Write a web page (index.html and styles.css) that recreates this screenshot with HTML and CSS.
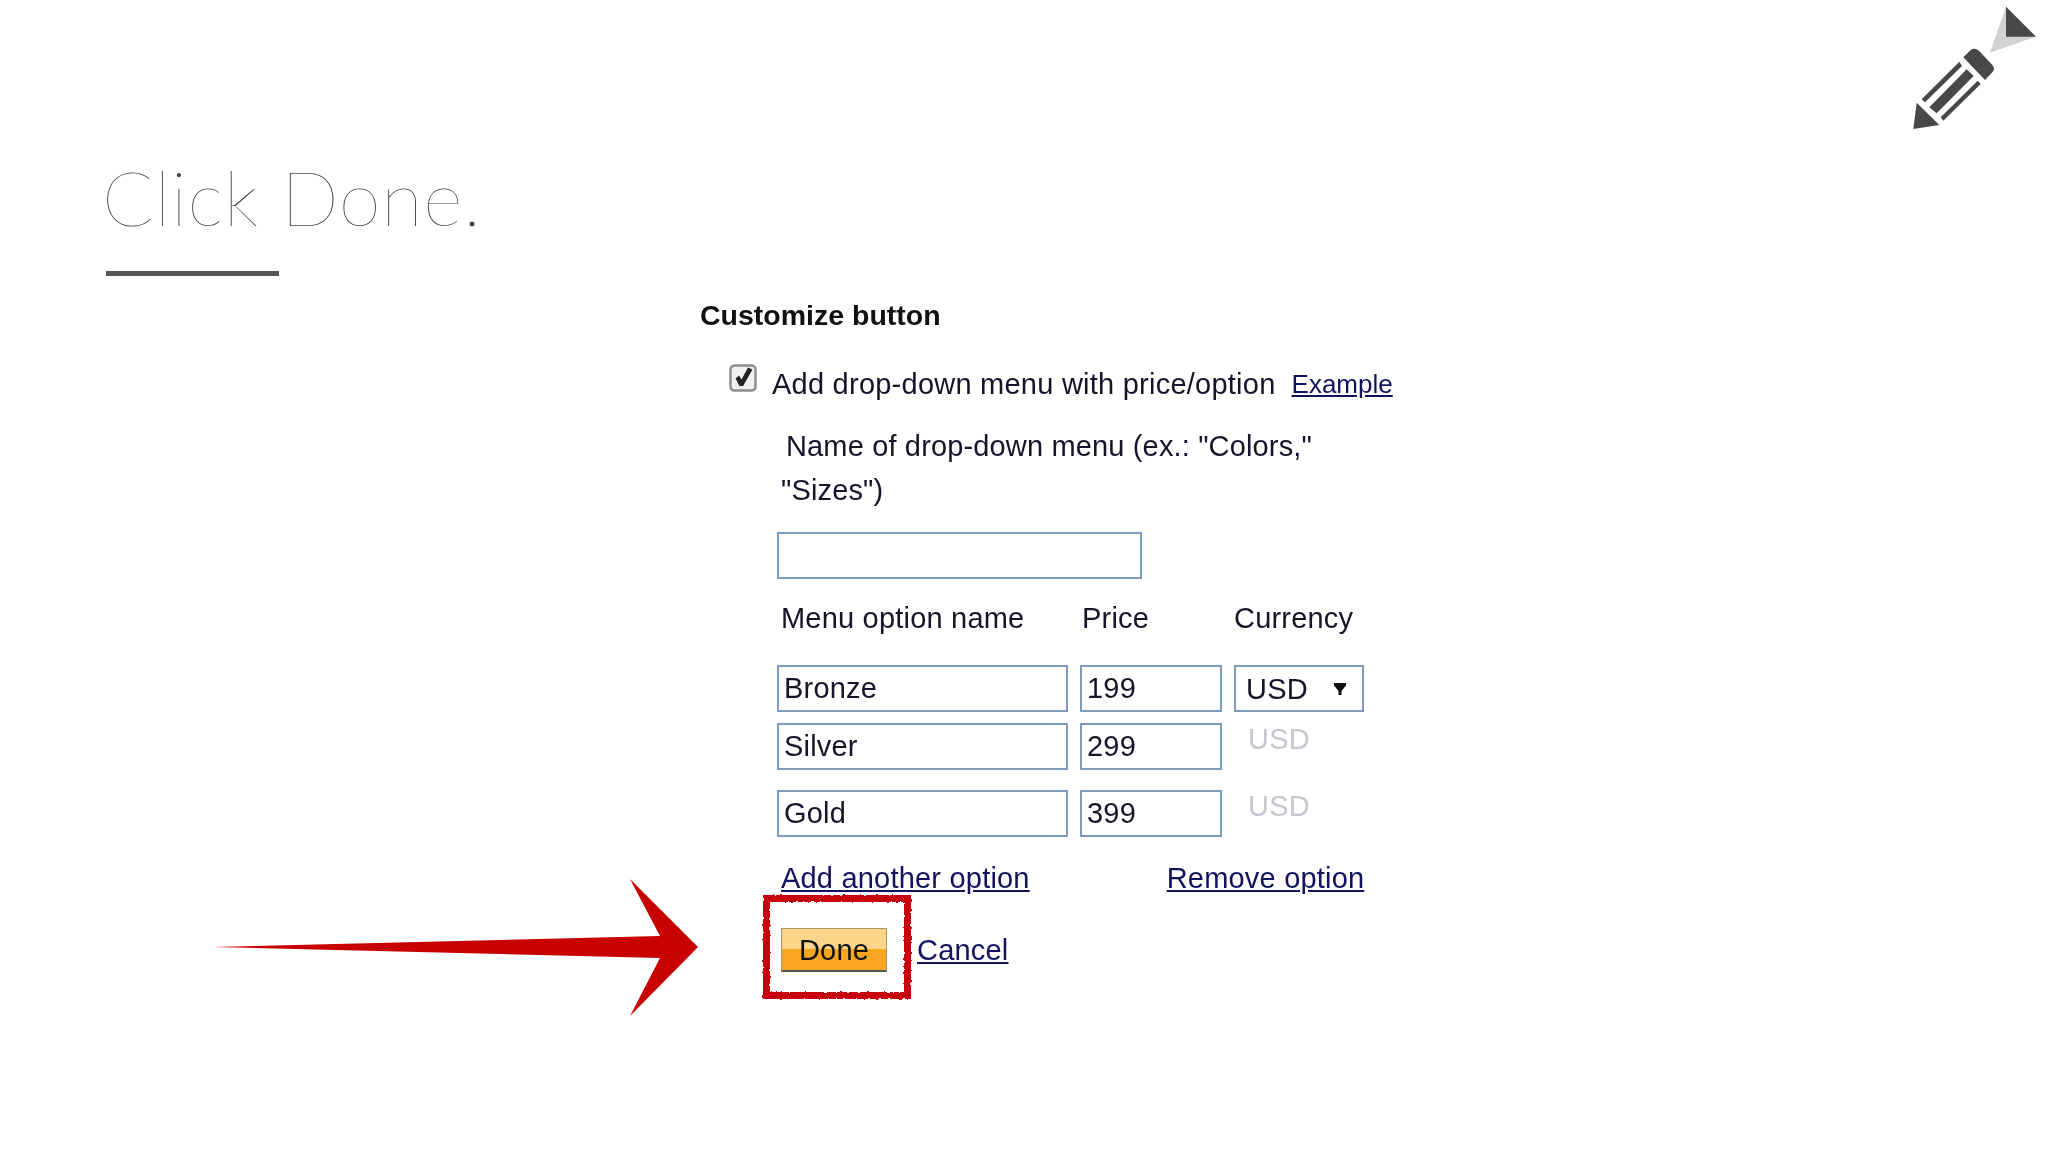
FILE: index.html
```html
<!DOCTYPE html>
<html lang="en">
<head>
<meta charset="utf-8">
<title>Click Done.</title>
<link rel="stylesheet" href="styles.css">
</head>
<body>
<main class="slide">
  <header class="head">
    <h1 class="title">Click Done.</h1>
    <div class="rule"></div>
  </header>

  <section class="form">
    <h2 class="form-title">Customize button</h2>
    <div class="check-row">
      <span class="check">
        <svg viewBox="0 0 28 28" width="28" height="28"><rect x="1.500" y="1.500" width="25" height="25" rx="4" fill="#f2f2f2" stroke="#8f8f8f" stroke-width="2.500"/><path d="M6.500 14.500L10 11.500 12.500 15.500 19 3.500 23.500 5.500 14 22H10.500z" fill="#222"/></svg>
      </span>
      <span class="check-label">Add drop-down menu with price/option</span>
      <a class="link link-small">Example</a>
    </div>
    <div class="inner">
      <p class="name-label"><span class="indent">Name of drop-down menu (ex.: "Colors,"</span><br>"Sizes")</p>
      <div class="field field-name"></div>
      <div class="opt-grid opt-head">
        <span class="col-a">Menu option name</span>
        <span class="col-b">Price</span>
        <span class="col-c">Currency</span>
      </div>
      <div class="opt-grid row-1">
        <div class="field">Bronze</div>
        <div class="field">199</div>
        <div class="field select"><span>USD</span><svg class="caret" viewBox="0 0 14 14" width="14" height="14"><path d="M1 1h12v2.500L8.500 9v4h-3V9L1 3.500z" fill="#111"/></svg></div>
      </div>
      <div class="opt-grid row-2">
        <div class="field">Silver</div>
        <div class="field">299</div>
        <span class="muted">USD</span>
      </div>
      <div class="opt-grid row-3">
        <div class="field">Gold</div>
        <div class="field">399</div>
        <span class="muted">USD</span>
      </div>
      <div class="links">
        <a class="link">Add another option</a>
        <a class="link">Remove option</a>
      </div>
      <div class="actions">
        <span class="done">Done</span>
        <a class="link">Cancel</a>
      </div>
    </div>
  </section>

  <svg class="red-box" viewBox="0 0 156 112" width="156" height="112">
    <defs>
      <filter id="rough" x="-5%" y="-5%" width="110%" height="110%">
        <feTurbulence type="fractalNoise" baseFrequency="0.25" numOctaves="2" seed="4"/>
        <feDisplacementMap in="SourceGraphic" scale="3"/>
      </filter>
    </defs>
    <rect x="7.500" y="7.500" width="141" height="97" fill="none" stroke="#c8050f" stroke-width="7" filter="url(#rough)"/>
  </svg>
  <svg class="arrow" viewBox="0 0 490 140" width="490" height="140"><path d="M0 68L447 57 417 0 485 68 417 137 447 79z" fill="#c80000"/></svg>
  <svg class="pencil" viewBox="0 0 504 420" width="168" height="140">
    <path d="M378 20L330 158 468 110z" fill="#d2d2d2"/>
    <path d="M378 20L468 110H378z" fill="#494747"/>
    <path d="M250 172L272 150Q285 142 297 152L337 195Q347 207 337 217L315 240z" fill="#494747"/>
    <path d="M125 298L238 185 246 198 135 307z" fill="#494747"/>
    <path d="M148 322L260 208 281 228 170 340z" fill="#494747"/>
    <path d="M182 352L293 242 302 252 190 362z" fill="#494747"/>
    <path d="M110 308L178 375 100 387z" fill="#494747"/>
  </svg>
</main>
</body>
</html>
```

FILE: styles.css
```css
* { box-sizing: border-box; }
html, body { margin: 0; padding: 0; background: #fff; }
.slide {
  position: relative;
  width: 2048px;
  height: 1152px;
  overflow: hidden;
  background: #fff;
  font-family: "Liberation Sans", Arial, sans-serif;
  font-size: 29px;
  line-height: 40px;
  letter-spacing: 0.2px;
  color: #15152a;
}
.head { padding: 152px 0 0 102px; height: 295px; }
.title {
  margin: 0;
  font-family: Lato, sans-serif;
  font-weight: 200;
  font-size: 76px;
  line-height: 90px;
  letter-spacing: 0.7px;
  color: #444;
}
.rule { width: 173px; height: 5px; margin: 29px 0 0 4px; background: #555; }
.form { margin-left: 700px; display: flex; flex-direction: column; filter: blur(0.4px); }
.form-title { margin: 0; font-size: 28.5px; line-height: 40px; font-weight: bold; letter-spacing: 0; color: #111; }
.check-row { display: flex; align-items: flex-start; margin: 29px 0 0 29px; }
.check { width: 43px; height: 40px; display: block; }
.check svg { display: block; }
.check-label { margin-right: 16px; letter-spacing: 0.24px; }
.link { color: #12125e; text-decoration: underline; }
.link-small { font-size: 26px; letter-spacing: 0; }
.inner { margin: 20px 0 0 77px; }
.name-label { margin: 0; padding-left: 4px; line-height: 44px; letter-spacing: 0.15px; }
.indent { padding-left: 5px; }
.field {
  height: 47px;
  line-height: 42px;
  padding-left: 5px;
  border: 2.5px solid #7f9cbc;
  background: #fff;
}
.field-name { width: 365px; margin-top: 20px; }
.opt-grid { display: grid; grid-template-columns: 291px 142px 130px; column-gap: 12px; }
.opt-head { margin-top: 19px; }
.col-a { padding-left: 4px; }
.col-b { padding-left: 2px; }
.col-c { padding-left: 0; }
.row-1 { margin-top: 27px; }
.row-2 { margin-top: 11px; }
.row-3 { margin-top: 20px; }
.select { display: flex; align-items: center; justify-content: space-between; padding: 0 15px 0 10px; }
.caret { display: block; }
.muted { color: #c4c8cf; padding-left: 14px; height: 47px; margin-top: -4px; }
.links { display: flex; gap: 137px; margin-top: 21px; padding-left: 4px; }
.actions { display: flex; align-items: center; gap: 30px; margin: 30px 0 0 4px; }
.done {
  display: block;
  width: 106px;
  height: 44px;
  font-size: 29px;
  line-height: 42px;
  text-align: center;
  color: #111;
  border: 1px solid #a89870;
  border-bottom: 2px solid #555;
  background: linear-gradient(#fdd58a 0, #fdd58a 50%, #f9a51f 50%, #f9a51f 100%);
}
.red-box { position: absolute; left: 759px; top: 891px; }
.arrow { position: absolute; left: 213px; top: 879px; }
.pencil { position: absolute; left: 1880px; top: 0; }
```
